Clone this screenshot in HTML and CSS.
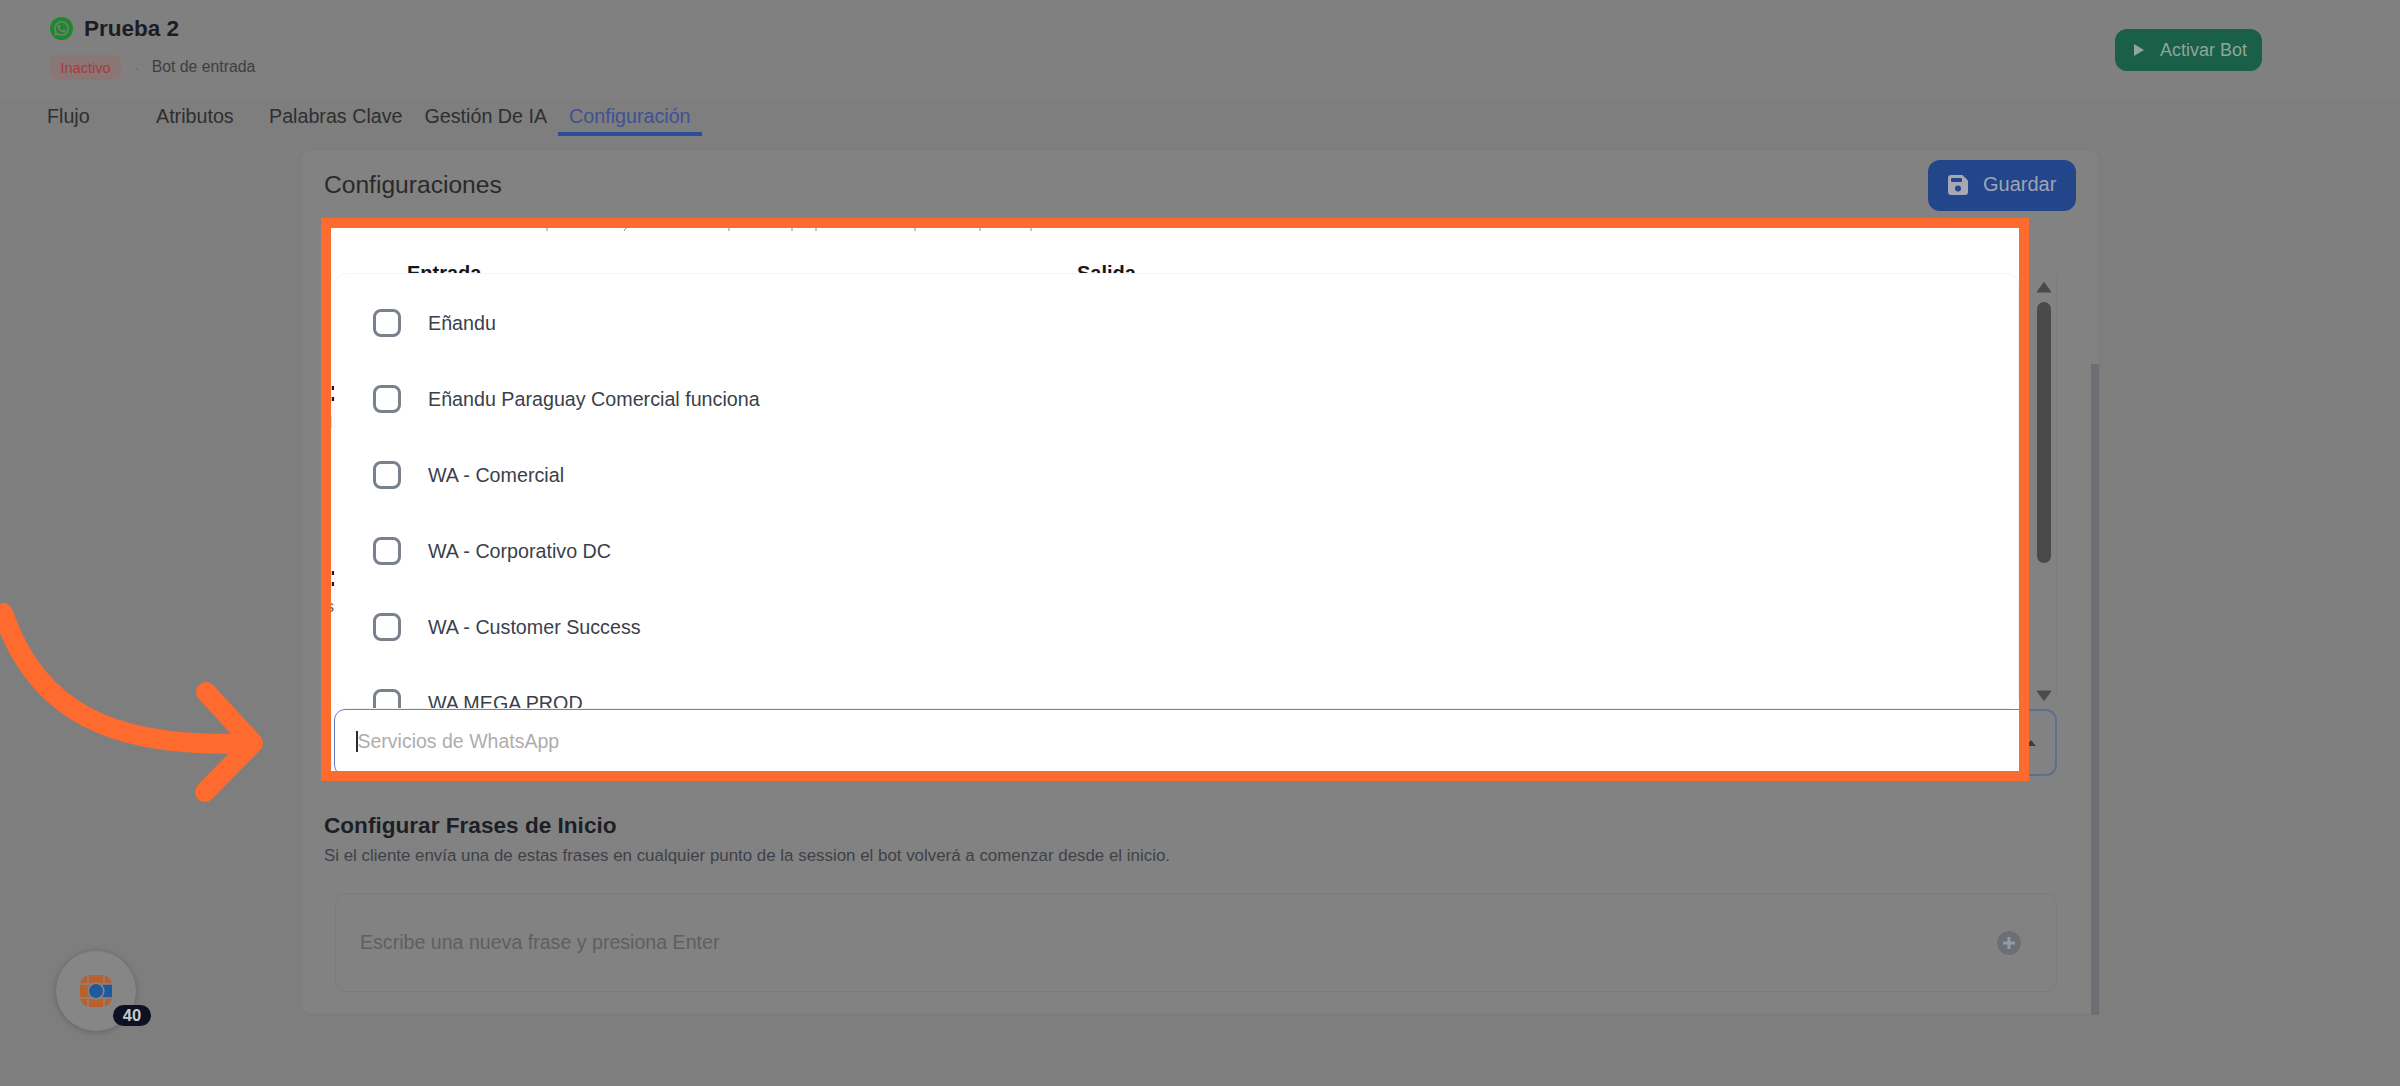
FILE: index.html
```html
<!DOCTYPE html>
<html lang="es">
<head>
<meta charset="utf-8">
<title>Prueba 2</title>
<link rel="stylesheet" href="styles.css">
</head>
<body>
<div class="app">
  <header class="topbar">
    <div class="bot-info">
      <div class="bot-name">
        <svg class="wa-icon" viewBox="0 0 24 24" aria-hidden="true">
          <circle cx="12" cy="12" r="12" fill="#1c8a2b"/>
          <g transform="translate(3.6 3.6) scale(.7)">
            <path d="M12.05 21.78h-.004a9.87 9.87 0 0 1-5.03-1.38l-.36-.21-3.74.98 1-3.65-.24-.37a9.86 9.86 0 0 1-1.51-5.26c0-5.45 4.44-9.88 9.89-9.88 2.64 0 5.12 1.03 6.99 2.9a9.83 9.83 0 0 1 2.89 7c0 5.45-4.44 9.87-9.89 9.87z" fill="none" stroke="#7a7a7a" stroke-width="2.4"/>
            <path d="M17.47 14.38c-.3-.15-1.76-.87-2.03-.97-.27-.1-.47-.15-.67.15-.2.3-.77.97-.94 1.16-.17.2-.35.22-.64.08-.3-.15-1.26-.46-2.39-1.48-.88-.79-1.48-1.76-1.65-2.06-.17-.3-.02-.46.13-.6.13-.14.3-.35.45-.52.15-.18.2-.3.3-.5.1-.2.05-.37-.03-.52-.07-.15-.67-1.61-.91-2.21-.25-.58-.49-.5-.67-.51h-.57c-.2 0-.52.07-.79.37-.27.3-1.04 1.02-1.04 2.48 0 1.46 1.06 2.87 1.21 3.07.15.2 2.1 3.2 5.08 4.49.7.3 1.26.49 1.69.62.71.23 1.36.2 1.87.12.57-.08 1.76-.72 2-1.41.25-.7.25-1.29.18-1.41-.08-.13-.27-.2-.57-.35z" fill="#7a7a7a"/>
          </g>
        </svg>
        <span>Prueba 2</span>
      </div>
      <div class="bot-meta">
        <span class="badge">Inactivo</span>
        <span class="dot">·</span>
        <span class="bot-type">Bot de entrada</span>
      </div>
    </div>
    <button class="btn btn-green" type="button">
      <svg class="play" viewBox="0 0 12 14" aria-hidden="true"><polygon points="1,1 11,7 1,13" fill="#8fa69c"/></svg>
      Activar Bot
    </button>
  </header>

  <nav class="tabs">
    <a class="tab tab-flujo">Flujo</a>
    <a class="tab tab-attr">Atributos</a>
    <a class="tab">Palabras Clave</a>
    <a class="tab">Gestión De IA</a>
    <a class="tab tab-active">Configuración</a>
  </nav>

  <main class="main">
    <section class="card">
      <div class="card-head">
        <h1 class="card-title">Configuraciones</h1>
        <button class="btn btn-blue" type="button">
          <svg class="save" viewBox="0 0 20 20" aria-hidden="true">
            <path d="M3 0h11.5L20 5.5V17a3 3 0 0 1-3 3H3a3 3 0 0 1-3-3V3a3 3 0 0 1 3-3z" fill="#a6a9b3"/>
            <rect x="3" y="3" width="11" height="4" rx="1" fill="#23458a"/>
            <circle cx="10" cy="13.5" r="3" fill="#23458a"/>
          </svg>
          Guardar
        </button>
      </div>

      <div class="scroll-box">
        <div class="scroll-rail">
          <svg class="scroll-arrow" viewBox="0 0 16 12" aria-hidden="true"><polygon points="8,1.5 15,11 1,11" fill="#4a4a4a" stroke="#4a4a4a" stroke-linejoin="round"/></svg>
          <div class="scroll-thumb"></div>
          <svg class="scroll-arrow scroll-arrow-down" viewBox="0 0 16 12" aria-hidden="true"><polygon points="1,1 15,1 8,10.5" fill="#4a4a4a" stroke="#4a4a4a" stroke-linejoin="round"/></svg>
        </div>
      </div>

      <div class="select-tail">
        <svg class="chevron" viewBox="0 0 10 6" aria-hidden="true"><polygon points="5,0 10,6 0,6" fill="#3c3c3c"/></svg>
      </div>

      <h2 class="section-title">Configurar Frases de Inicio</h2>
      <p class="section-sub">Si el cliente envía una de estas frases en cualquier punto de la session el bot volverá a comenzar desde el inicio.</p>
      <div class="phrase-box">
        <span>Escribe una nueva frase y presiona Enter</span>
        <svg class="plus" viewBox="0 0 24 24" aria-hidden="true">
          <circle cx="12" cy="12" r="12" fill="#6b7076"/>
          <path d="M12 6v12M6 12h12" stroke="#959a9f" stroke-width="3"/>
        </svg>
      </div>

      <div class="page-scroll"></div>
    </section>
  </main>
</div>

<div class="spot">
  <div class="spot-head">
    <svg class="ticks" viewBox="0 0 1688 4" aria-hidden="true">
      <path d="M216 0v3M295 0l-2 3M398 0v3M461 0v3M485 0v3M584 0v3M649 0v3M700 0v3" stroke="#8a8a8a" stroke-width="1" fill="none"/>
    </svg>
    <span class="col col-in">Entrada</span>
    <span class="col col-out">Salida</span>
  </div>
  <span class="sliver sliver-a">:</span>
  <span class="sliver sliver-b">:</span>
  <span class="sliver-s sliver-faint">l</span>
  <span class="sliver-s sliver-low">s</span>
  <div class="panel">
    <label class="opt"><span class="check"></span>Eñandu</label>
    <label class="opt"><span class="check"></span>Eñandu Paraguay Comercial funciona</label>
    <label class="opt"><span class="check"></span>WA - Comercial</label>
    <label class="opt"><span class="check"></span>WA - Corporativo DC</label>
    <label class="opt"><span class="check"></span>WA - Customer Success</label>
    <label class="opt"><span class="check"></span>WA MEGA PROD</label>
  </div>
  <div class="combo"><i class="caret"></i><span>Servicios de WhatsApp</span></div>
</div>

<svg class="arrow" viewBox="0 0 270 210" aria-hidden="true">
  <path d="M3 13C36 110 110 150 252 143M206 92l47 51-48 49" fill="none" stroke="#ff6a2e" stroke-width="20" stroke-linecap="round" stroke-linejoin="round"/>
</svg>

<div class="helper">
  <svg class="helper-logo" viewBox="0 0 32 32" aria-hidden="true">
    <defs><clipPath id="ball"><rect width="32" height="32" rx="10"/></clipPath></defs>
    <g clip-path="url(#ball)">
      <rect width="32" height="32" fill="#b9602f"/>
      <rect x="23" y="9" width="9" height="14" fill="#1f5a9c"/>
      <path d="M8 0v9M24 0v9M8 23v9M24 23v9M0 9h32M0 23h32" stroke="#868686" stroke-width="1.6"/>
    </g>
    <circle cx="16" cy="16" r="8.6" fill="#868686"/>
    <circle cx="16" cy="16" r="7" fill="#1f5a9c"/>
  </svg>
  <span class="helper-count">40</span>
</div>
</body>
</html>
```

FILE: styles.css
```css
* { box-sizing: border-box; }

html, body {
  margin: 0;
  height: 100%;
  overflow: hidden;
}

body {
  background: #7e7e7e;
  font-family: "Liberation Sans", Arial, sans-serif;
  color: #2b2b2b;
}

.app {
  display: flex;
  flex-direction: column;
  height: 1086px;
}

/* top bar */
.topbar {
  height: 100px;
  padding: 17px 138px 0 50px;
  background: #808080;
  display: flex;
  justify-content: space-between;
  align-items: flex-start;
  flex: none;
}

.bot-name {
  display: flex;
  align-items: center;
  gap: 11px;
  height: 23px;
  font-size: 22.5px;
  font-weight: 700;
  color: #1b1d24;
}

.wa-icon { width: 23px; height: 23px; flex: none; }

.bot-meta {
  display: flex;
  align-items: center;
  margin-top: 15px;
  height: 25px;
}

.badge {
  display: flex;
  align-items: center;
  justify-content: center;
  width: 71px;
  height: 25px;
  border-radius: 8px;
  background: #8b7676;
  color: #a03c3c;
  font-size: 14.5px;
}

.dot { margin: 0 0 0 13px; font-size: 14px; color: #666; }

.bot-type {
  margin-left: 13px;
  font-size: 15.8px;
  color: #3e3e3e;
  position: relative;
  top: -1px;
}

.btn {
  display: flex;
  align-items: center;
  border: 0;
  font-family: inherit;
  padding: 0;
}

.btn-green {
  width: 147px;
  height: 42px;
  margin-top: 12px;
  padding-left: 18px;
  gap: 15px;
  border-radius: 12px;
  background: #1a5f47;
  color: #8fa69c;
  font-size: 18px;
}

.play { width: 12px; height: 14px; flex: none; }

/* tabs */
.tabs {
  height: 48px;
  padding: 0 0 0 36px;
  display: flex;
  flex: none;
}

.tab {
  height: 36px;
  padding: 5px 11px 0;
  font-size: 19.7px;
  line-height: 23px;
  color: #2e2e2e;
  white-space: nowrap;
}

.tab-flujo { width: 109px; }
.tab-attr { width: 113px; }

.tab-active {
  color: #3f5193;
  border-bottom: 4px solid #2a4d9e;
}

/* main card */
.main {
  flex: 1;
  display: flex;
  justify-content: center;
  align-items: flex-start;
  padding-top: 1px;
}

.card {
  position: relative;
  width: 1800px;
  height: 866px;
  padding: 10px 23px 0;
  background: #828282;
  border: 1px solid #7b7b7b;
  border-radius: 12px;
}

.card-head {
  display: flex;
  justify-content: space-between;
  align-items: center;
  height: 51px;
}

.card-title {
  margin: 0;
  font-size: 24.6px;
  font-weight: 400;
  color: #2a2a2a;
  position: relative;
  top: -1px;
}

.btn-blue {
  width: 148px;
  height: 51px;
  padding: 0 0 2px 20px;
  gap: 15px;
  border-radius: 12px;
  background: #23458a;
  color: #a0a4b4;
  font-size: 20px;
}

.save { width: 20px; height: 20px; flex: none; }

.scroll-box {
  margin: 64px 19px 0 10px;
  height: 427px;
  display: flex;
  justify-content: flex-end;
}

.scroll-rail {
  width: 26px;
  height: 100%;
  display: flex;
  flex-direction: column;
  align-items: center;
  padding-top: 6px;
  border-right: 1px solid #7c7c7c;
  border-radius: 0 0 10px 0;
}

.scroll-arrow { width: 16px; height: 12px; flex: none; }

.scroll-thumb {
  width: 14px;
  height: 261px;
  margin-top: 9px;
  border-radius: 7px;
  background: #4a4a4a;
}

.scroll-arrow-down { margin-top: auto; }

.select-tail {
  margin: 7px 19px 0 10px;
  height: 67px;
  border: 2px solid #5f6d90;
  border-radius: 11px;
  display: flex;
  justify-content: flex-end;
  align-items: center;
  padding-right: 19px;
}

.chevron { width: 10px; height: 6px; }

.section-title {
  margin: 37px 0 0;
  font-size: 22.6px;
  line-height: 26px;
  font-weight: 700;
  color: #1c1f26;
}

.section-sub {
  margin: 7px 0 0;
  font-size: 16.9px;
  line-height: 20px;
  color: #3f4147;
}

.phrase-box {
  margin: 27px 19px 0 11px;
  height: 99px;
  padding: 0 35px 0 24px;
  display: flex;
  justify-content: space-between;
  align-items: center;
  border: 1px solid #7a7a7a;
  border-radius: 11px;
  font-size: 19.6px;
  color: #5f5f5f;
}

.plus { width: 24px; height: 24px; flex: none; }

.page-scroll {
  position: absolute;
  top: 214px;
  right: 0;
  bottom: -1px;
  width: 8px;
  background: #6c7074;
}

/* spotlight frame */
.spot {
  position: absolute;
  left: 321px;
  top: 218px;
  width: 1708px;
  height: 563px;
  border: 10px solid #ff6a2e;
  background: #fff;
  overflow: hidden;
}

.spot-head {
  position: relative;
  height: 45px;
  overflow: hidden;
  display: flex;
  padding: 34px 0 0 76px;
  font-size: 20px;
  font-weight: 700;
  line-height: 23px;
  color: #14171f;
}

.ticks {
  position: absolute;
  left: 0;
  top: 0;
  width: 1688px;
  height: 4px;
}

.col-in { width: 670px; }

.sliver {
  position: absolute;
  left: -2px;
  font-size: 29px;
  font-weight: 700;
  line-height: 30px;
  color: #14171f;
}

.sliver-a { top: 148px; }
.sliver-b { top: 333px; }

.sliver-s {
  position: absolute;
  font-size: 16px;
  line-height: 18px;
}

.sliver-low {
  left: -5px;
  top: 370px;
  color: #5a6270;
}

.sliver-faint {
  left: -2px;
  top: 186px;
  color: #c4c8ce;
}

.panel {
  position: relative;
  margin-left: 3px;
  height: 436px;
  padding-top: 11px;
  background: #fff;
  border: 1px solid #f4f4f4;
  border-radius: 12px;
  overflow: hidden;
}

.opt {
  display: flex;
  align-items: center;
  height: 76px;
  padding-left: 38px;
  gap: 27px;
  font-size: 19.7px;
  color: #3a3f4a;
}

.check {
  width: 28px;
  height: 28px;
  border: 3px solid #78818c;
  border-radius: 8px;
  flex: none;
}

.combo {
  position: relative;
  display: flex;
  align-items: center;
  margin-left: 3px;
  width: 1723px;
  height: 67px;
  padding: 0 0 2px 21px;
  background: #fff;
  border: 1px solid #6680c4;
  border-radius: 11px;
  font-size: 19.5px;
  color: #adadad;
}

.caret {
  width: 1.5px;
  height: 21px;
  background: #2b2b2b;
}

/* arrow */
.arrow {
  position: absolute;
  left: 0;
  top: 600px;
  width: 270px;
  height: 210px;
}

/* helper bubble */
.helper {
  position: absolute;
  left: 56px;
  top: 951px;
  width: 80px;
  height: 80px;
  border-radius: 50%;
  background: #868686;
  box-shadow: 0 1px 6px rgba(0, 0, 0, .22);
  display: flex;
  align-items: center;
  justify-content: center;
}

.helper-logo { width: 32px; height: 32px; }

.helper-count {
  position: absolute;
  left: 57px;
  top: 54px;
  width: 38px;
  height: 21px;
  border-radius: 11px;
  background: #0d1122;
  color: #c9c9c9;
  font-size: 16.5px;
  font-weight: 700;
  line-height: 21px;
  text-align: center;
}
```
